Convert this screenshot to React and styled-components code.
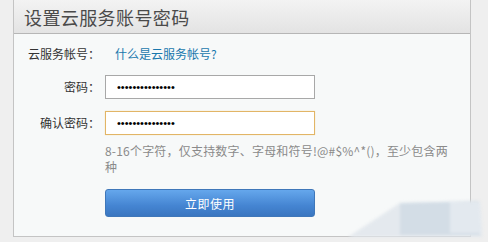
import React from "react";
import styled, { createGlobalStyle } from "styled-components";

const GlobalStyle = createGlobalStyle`
  html, body {
    margin: 0;
    padding: 0;
    background: #efefef;
    font-family: "Noto Sans CJK SC", "Liberation Sans", sans-serif;
  }
`;

const Page = styled.div`
  position: relative;
  width: 488px;
  height: 242px;
  overflow: hidden;
  padding-left: 13px;
  box-sizing: border-box;
`;

const Panel = styled.div`
  width: 458px;
  height: 237px;
  box-sizing: border-box;
  background: #f7f9f9;
  border: 1px solid #c4c4c4;
  border-top: none;
  display: flex;
  flex-direction: column;
`;

const Header = styled.div`
  height: 34px;
  box-sizing: border-box;
  background: linear-gradient(#f3f3f3, #e3e3e3);
  border-bottom: 1px solid #b6b6b6;
  display: flex;
  align-items: center;
  padding-left: 10px;
`;

const Title = styled.h1`
  margin: 0;
  font-size: 18px;
  font-weight: normal;
  color: #4a4a4a;
  letter-spacing: 0.4px;
`;

const Form = styled.div`
  display: grid;
  grid-template-columns: 86px 1fr;
  column-gap: 5px;
  align-items: center;
  padding-top: 11px;
`;

const Label = styled.label`
  font-size: 12px;
  color: #333;
  text-align: right;
  height: ${(p) => p.$h}px;
  line-height: ${(p) => p.$h}px;
  margin-bottom: ${(p) => p.$mb || 0}px;
`;

const Link = styled.a`
  font-size: 12px;
  color: #1a78ad;
  text-decoration: none;
  padding-left: 10px;
  height: 18px;
  line-height: 18px;
  margin-bottom: 12px;
`;

const Input = styled.input`
  width: 210px;
  height: 24px;
  box-sizing: border-box;
  background: #fff;
  border: 1px solid ${(p) => (p.$focus ? "#e2b566" : "#a8a8a8")};
  box-shadow: ${(p) => (p.$focus ? "0 0 1px #f0d9a8" : "none")};
  padding: 0 0 0 11px;
  font-family: "Liberation Sans", sans-serif;
  font-size: 11px;
  letter-spacing: 0;
  color: #000;
  outline: none;
  margin-bottom: ${(p) => p.$mb || 0}px;
`;

const Hint = styled.p`
  grid-column: 2;
  margin: 8px 0 0;
  width: 348px;
  font-size: 12px;
  line-height: 16px;
  letter-spacing: 0.2px;
  color: #8a8a8a;
`;

const Button = styled.button`
  grid-column: 2;
  margin-top: 14px;
  width: 210px;
  height: 28px;
  border: 1px solid #3f77b9;
  border-radius: 3px;
  background: linear-gradient(#65a7ec, #4585d2 60%, #3a76c0);
  color: #fff;
  font-family: "Noto Sans CJK SC", sans-serif;
  font-size: 12px;
  letter-spacing: 0.5px;
  cursor: pointer;
`;

const Smudge = styled.svg`
  position: absolute;
  left: 340px;
  top: 195px;
  filter: blur(1.5px);
`;

export default function App() {
  return (
    <>
      <GlobalStyle />
      <Page>
        <Panel>
          <Header>
            <Title>设置云服务账号密码</Title>
          </Header>
          <Form>
            <Label $h={18} $mb={12}>云服务帐号：</Label>
            <Link href="#">什么是云服务帐号?</Link>
            <Label $h={24} $mb={12}>密码：</Label>
            <Input type="password" defaultValue="123456789012345" $mb={12} />
            <Label $h={24}>确认密码：</Label>
            <Input type="password" defaultValue="123456789012345" $focus />
            <Hint>8-16个字符，仅支持数字、字母和符号!@#$%^*()，至少包含两种</Hint>
            <Button>立即使用</Button>
          </Form>
        </Panel>
        <Smudge width="148" height="47" viewBox="0 0 148 47">
          <polygon points="8,42 60,8 140,6 142,42" fill="#e4e9ee" />
          <polygon points="60,8 138,6 140,40 60,40" fill="#d3dde6" />
          <polygon points="110,7 140,7 142,38 110,38" fill="#e3e9ef" />
        </Smudge>
      </Page>
    </>
  );
}
